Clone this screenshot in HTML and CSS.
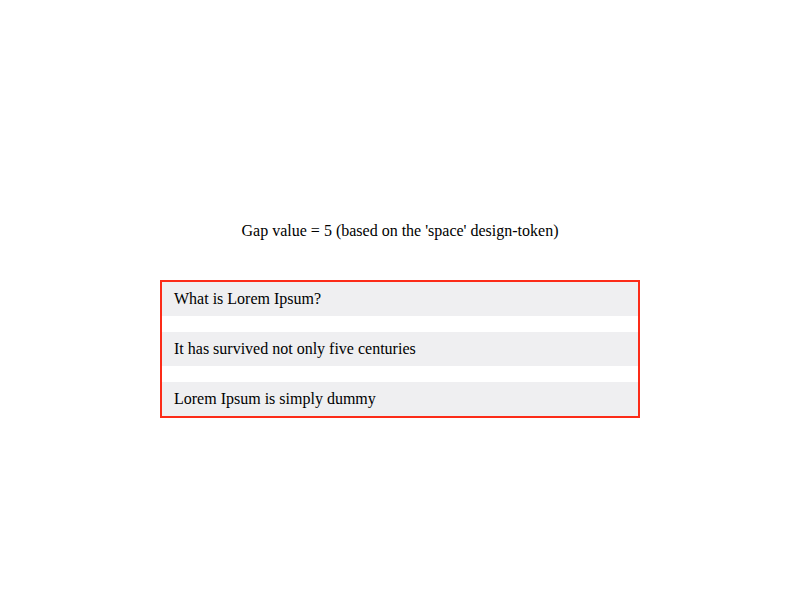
FILE: index.html
```html
<!DOCTYPE html>
<html lang="en">
<head>
<meta charset="utf-8">
<title>Stack gap</title>
<link rel="stylesheet" href="styles.css">
</head>
<body>
<main class="demo">
<p class="caption">Gap value = 5 (based on the 'space' design-token)</p>
<div class="stack">
<div class="item">What is Lorem Ipsum?</div>
<div class="item">It has survived not only five centuries</div>
<div class="item">Lorem Ipsum is simply dummy</div>
</div>
</main>
</body>
</html>
```
FILE: styles.css
```css
* { box-sizing: border-box; }
body {
  margin: 0;
  min-height: 100vh;
  display: flex;
  justify-content: center;
  background: #fff;
  color: #000;
  font: 16px/18px "Liberation Serif", "Times New Roman", serif;
}
.demo {
  width: 480px;
  padding-top: 222px;
}
.caption {
  margin: 0 0 40px;
  text-align: center;
}
.stack {
  display: flex;
  flex-direction: column;
  gap: 16px;
  border: 2px solid #fc2b18;
}
.item {
  padding: 8px 12px;
  background: #efeff1;
}
```
